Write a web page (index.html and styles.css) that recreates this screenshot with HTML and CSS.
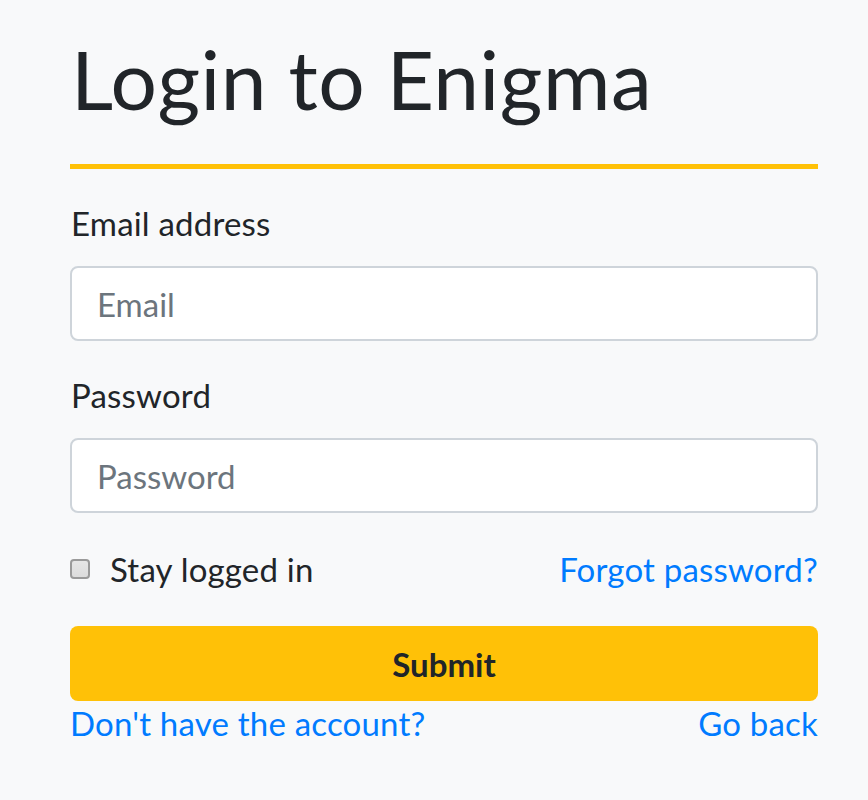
FILE: index.html
```html
<!DOCTYPE html>
<html lang="en">
<head>
<meta charset="utf-8">
<title>Login to Enigma</title>
<link rel="stylesheet" href="styles.css">
</head>
<body>
<main class="page">
  <h1 class="title">Login to Enigma</h1>
  <hr class="rule">
  <form class="form">
    <div class="field">
      <label class="label" for="email">Email address</label>
      <input class="input" id="email" type="email" placeholder="Email">
    </div>
    <div class="field">
      <label class="label" for="password">Password</label>
      <input class="input" id="password" type="password" placeholder="Password">
    </div>
    <div class="row options">
      <label class="check"><input type="checkbox" class="box"><span>Stay logged in</span></label>
      <a class="link" href="#">Forgot password?</a>
    </div>
    <button class="submit" type="button">Submit</button>
    <div class="row links">
      <a class="link" href="#">Don't have the account?</a>
      <a class="link" href="#">Go back</a>
    </div>
  </form>
</main>
</body>
</html>
```
FILE: styles.css
```css
html, body {
  margin: 0;
  padding: 0;
  background: #f8f9fa;
}
body {
  font-family: "Lato", "Noto Sans", sans-serif;
  color: #212529;
  font-size: 33px;
  letter-spacing: 0.2px;
}
.page {
  width: 748px;
  margin-left: 70px;
  padding-top: 29px;
}
.title {
  margin: 0;
  font-size: 82px;
  font-weight: 400;
  line-height: 98px;
  padding-left: 1px;
  letter-spacing: 0.5px;
}
.rule {
  margin: 37px 0 0;
  border: 0;
  height: 5px;
  background: #ffc107;
}
.form {
  display: flex;
  flex-direction: column;
  margin-top: 32px;
}
.field {
  display: flex;
  flex-direction: column;
  margin-bottom: 32px;
}
.label {
  line-height: 45px;
  margin-bottom: 20px;
  padding-left: 1px;
}
.input {
  box-sizing: border-box;
  height: 75px;
  border: 2px solid #ced4da;
  border-radius: 8px;
  background: #fff;
  padding: 0 25px;
  font: inherit;
  color: #495057;
}
.input::placeholder {
  color: #6c757d;
}
.row {
  display: flex;
  justify-content: space-between;
  align-items: center;
}
.options {
  height: 45px;
  margin-top: 1px;
}
.check {
  display: flex;
  align-items: center;
  gap: 20px;
}
.box {
  appearance: none;
  margin: 0;
  width: 20px;
  height: 20px;
  box-sizing: border-box;
  border: 2px solid #9a9a9a;
  border-radius: 4px;
  background: linear-gradient(#e6e6e6, #dcdcdc);
}
.link {
  color: #007bff;
  text-decoration: none;
}
.submit {
  margin-top: 35px;
  height: 75px;
  border: 0;
  border-radius: 8px;
  background: #ffc107;
  font: inherit;
  font-weight: 700;
  color: #212529;
}
.links {
  line-height: 45px;
  margin-top: 0;
}
```
